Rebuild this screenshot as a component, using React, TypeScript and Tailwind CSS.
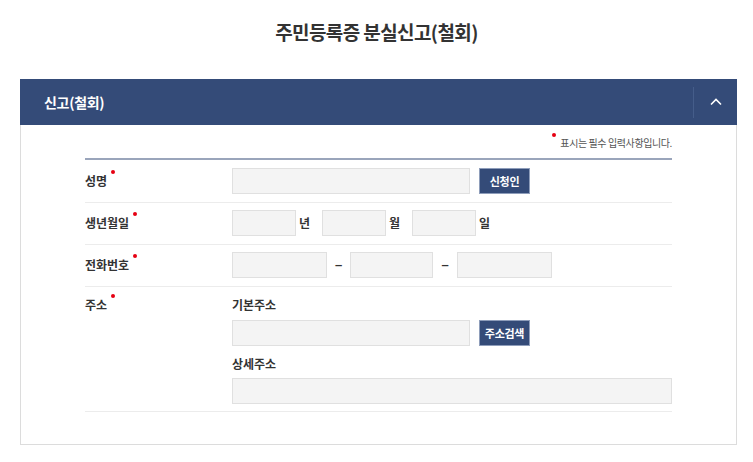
import React from 'react';

const font = { fontFamily: '"Noto Sans CJK KR", "Noto Sans", sans-serif' };

function Label({ text, top }: { text: string; top?: boolean }) {
  return (
    <div className={`flex w-[147px] shrink-0 text-[12px] leading-[16px] ${top ? 'items-start' : 'items-center'}`}>
      <span className="relative font-bold text-[#333]">
        {text}
        <span className="absolute -right-[8px] -top-[3px] h-[4px] w-[4px] rounded-full bg-[#e60012]" />
      </span>
    </div>
  );
}

function Field({ w }: { w: string }) {
  return <input type="text" className={`${w} h-[26px] border border-[#e0e0e0] bg-[#f4f4f4] outline-none`} />;
}

function NavyButton({ text }: { text: string }) {
  return (
    <button
      type="button"
      className="ml-[9px] h-[26px] w-[51px] border border-[#8e9dba] bg-[#344b78] text-[11px] font-bold tracking-[-0.3px] text-white"
    >
      {text}
    </button>
  );
}

function Dash({ w }: { w: string }) {
  return (
    <span
      className={`${w} text-center text-[13px] font-black leading-[14px] text-[#333]`}
      style={{ fontFamily: '"Liberation Sans", sans-serif' }}
    >
      –
    </span>
  );
}

export default function App() {
  return (
    <div className="min-h-screen w-full bg-white" style={font}>
      {/* Title */}
      <h1 className="pt-[18px] text-center text-[19px] font-bold leading-[28px] tracking-[-0.6px] text-[#333]">
        주민등록증 분실신고(철회)
      </h1>

      {/* Panel */}
      <div className="ml-[20px] mt-[33px] w-[717px]">
        <div className="flex h-[46px] items-center justify-between bg-[#344b78] pl-[24px]">
          <span className="text-[14px] font-bold tracking-[-0.3px] text-white">신고(철회)</span>
          <div className="flex h-[31px] w-[44px] items-center justify-center border-l border-[#455d8a]">
            <svg width="12" height="8" viewBox="0 0 12 8" fill="none">
              <path d="M1 6.5 L6 1.5 L11 6.5" stroke="white" strokeWidth="1.6" />
            </svg>
          </div>
        </div>

        <div className="border border-t-0 border-[#dcdcdc] px-[64px] pb-[32px] pt-[9px]">
          <div className="flex h-[16px] items-center justify-end text-[10px] tracking-[-0.4px] text-[#555]">
            <span className="relative pl-[8px]">
              <span className="absolute left-0 -top-[2px] h-[4px] w-[4px] rounded-full bg-[#e60012]" />
              표시는 필수 입력사항입니다.
            </span>
          </div>

          <div className="mt-[8px] border-t-2 border-[#9aa5bb]">
            {/* 성명 */}
            <div className="flex border-b border-[#ececec] py-[8px]">
              <Label text="성명" />
              <div className="flex items-center">
                <Field w="w-[238px]" />
                <NavyButton text="신청인" />
              </div>
            </div>

            {/* 생년월일 */}
            <div className="flex border-b border-[#ececec] pb-[8px] pt-[7px]">
              <Label text="생년월일" />
              <div className="flex items-center text-[12px] font-bold text-[#333]">
                <Field w="w-[64px]" />
                <span className="ml-[3px] w-[23px]">년</span>
                <Field w="w-[64px]" />
                <span className="ml-[3px] w-[23px]">월</span>
                <Field w="w-[64px]" />
                <span className="ml-[3px]">일</span>
              </div>
            </div>

            {/* 전화번호 */}
            <div className="flex border-b border-[#ececec] pb-[8px] pt-[7px]">
              <Label text="전화번호" />
              <div className="flex items-center">
                <Field w="w-[95px]" />
                <Dash w="w-[23px]" />
                <Field w="w-[83px]" />
                <Dash w="w-[24px]" />
                <Field w="w-[95px]" />
              </div>
            </div>

            {/* 주소 */}
            <div className="flex border-b border-[#ececec] pb-[7px] pt-[10px]">
              <Label text="주소" top />
              <div className="flex flex-1 flex-col">
                <span className="text-[12px] font-bold leading-[16px] text-[#333]">기본주소</span>
                <div className="mt-[7px] flex items-center">
                  <Field w="w-[238px]" />
                  <NavyButton text="주소검색" />
                </div>
                <span className="mt-[10px] text-[12px] font-bold leading-[16px] text-[#333]">상세주소</span>
                <div className="mt-[6px] flex">
                  <Field w="w-full" />
                </div>
              </div>
            </div>
          </div>
        </div>
      </div>
    </div>
  );
}
